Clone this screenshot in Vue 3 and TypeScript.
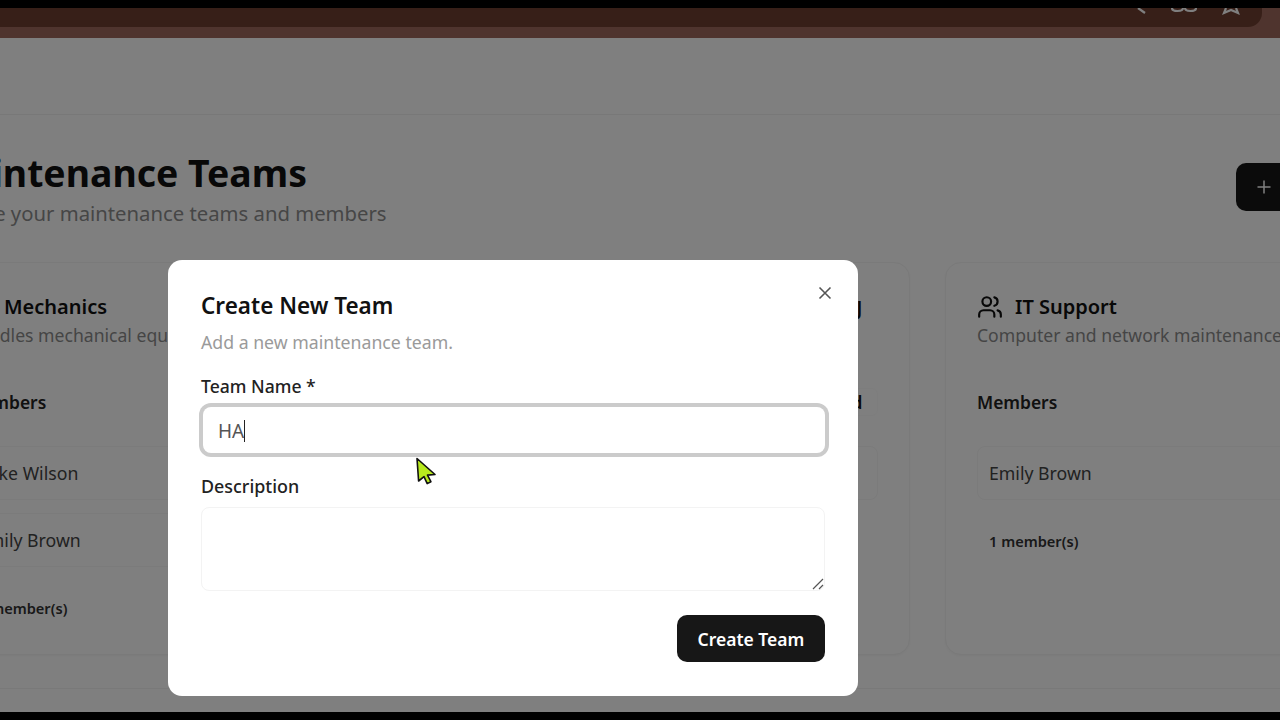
<template>
  <div class="screen">
    <div class="viewport">
      <!-- Browser chrome, cut off by the recording -->
      <div class="chrome">
        <div class="toolbar">
          <svg class="tool tool-chevron" viewBox="0 0 14 14"><path d="M3 0l7 5" /></svg>
          <svg class="tool tool-link" viewBox="0 0 26 14"><path d="M1 0c0 2.500 2 3 5.500 3S12 2.500 12 0M14 0c0 2.500 2 3 5.500 3S25 2.500 25 0" /></svg>
          <svg class="tool tool-star" viewBox="0 0 20 14"><path d="M5 0 3 5l7-3 7 3-2-5" /></svg>
        </div>
      </div>

      <div class="page">
        <div class="navbar"></div>
        <main class="content">
          <div class="page-head">
            <div>
              <h1>Maintenance Teams</h1>
              <p>Manage your maintenance teams and members</p>
            </div>
            <button class="add-team" type="button" tabindex="-1">
              <svg viewBox="0 0 16 16"><path d="M8 1.500v13M1.500 8h13" /></svg>
              Add Team
            </button>
          </div>

          <div class="team-grid">
            <section v-for="team in teams" :key="team.name" class="team-card">
              <div class="card-title">
                <svg class="team-icon" viewBox="0 0 24 24">
                  <circle cx="9" cy="7" r="4" />
                  <path d="M16 21v-2a4 4 0 0 0-4-4H6a4 4 0 0 0-4 4v2" />
                  <path d="M16 3.130a4 4 0 0 1 0 7.750" />
                  <path d="M22 21v-2a4 4 0 0 0-3-3.870" />
                </svg>
                <h2>{{ team.name }}</h2>
                <span v-if="team.tag" class="title-tag">{{ team.tag }}</span>
              </div>
              <p class="card-desc">{{ team.description }}</p>
              <div class="members-head">
                <span>Members</span>
                <span v-if="team.action" class="member-action">{{ team.action }}</span>
              </div>
              <div v-for="member in team.members" :key="member" class="member-row">{{ member }}</div>
              <div class="member-count">{{ team.members.length }} member(s)</div>
            </section>
          </div>
          <div class="next-row"></div>
        </main>
      </div>

      <div class="overlay">
        <form class="modal" @submit.prevent>
          <button class="close" type="button" aria-label="Close" tabindex="-1">
            <svg viewBox="0 0 16 16"><path d="M2.500 2.500l11 11M13.500 2.500l-11 11" /></svg>
          </button>
          <h3>Create New Team</h3>
          <p class="modal-sub">Add a new maintenance team.</p>
          <label class="field-label">Team Name *</label>
          <div class="name-input">
            <span>HA</span><i class="caret"></i>
          </div>
          <label class="field-label desc-label" for="team-desc">Description</label>
          <div class="desc-wrap">
            <textarea id="team-desc" tabindex="-1"></textarea>
            <svg class="resizer" viewBox="0 0 12 12"><path d="M1 11 11 1M7 11l4-4" /></svg>
          </div>
          <div class="modal-foot">
            <button class="submit" type="submit" tabindex="-1">Create Team</button>
          </div>
        </form>

        <svg class="cursor" viewBox="0 0 22 28">
          <path d="M2 1.500 20 17.500l-7.500.6 3.400 6.600-3.700 1.900-3.200-6.900L3.600 24z" />
        </svg>
      </div>
    </div>
  </div>
</template>

<script setup lang="ts">
interface Team {
  name: string;
  description: string;
  tag?: string;
  action?: string;
  members: string[];
}

const teams: Team[] = [
  {
    name: "Mechanics",
    description: "Handles mechanical equipment repairs",
    members: ["Mike Wilson", "Emily Brown"],
  },
  {
    name: "Facilities",
    description: "Building systems",
    tag: "J",
    action: "Add",
    members: ["Sarah Lee"],
  },
  {
    name: "IT Support",
    description: "Computer and network maintenance",
    members: ["Emily Brown"],
  },
];
</script>

<style>
html,
body {
  margin: 0;
  background: #000;
}
</style>

<style scoped>
.screen {
  width: 1280px;
  height: 720px;
  padding: 8px 0;
  box-sizing: border-box;
  background: #000;
  overflow: hidden;
  font-family: "Noto Sans", "Open Sans", sans-serif;
}

.viewport {
  position: relative;
  height: 704px;
  overflow: hidden;
  display: flex;
  flex-direction: column;
}

/* ── Browser chrome ── */
.chrome {
  flex: 0 0 30px;
  box-sizing: border-box;
  background: #9e695c;
  padding-right: 18px;
}

.toolbar {
  position: relative;
  height: 19px;
  background: #6f3f31;
  border-radius: 0 0 14px 0;
}

.tool {
  position: absolute;
  top: 0;
  fill: none;
  stroke: #fff;
  stroke-width: 2.200;
}

.tool-chevron {
  left: 1135px;
  width: 14px;
  height: 14px;
}

.tool-link {
  left: 1171px;
  width: 26px;
  height: 14px;
}

.tool-star {
  left: 1221px;
  width: 20px;
  height: 14px;
}

/* ── Page behind the dialog ── */
.page {
  flex: 1;
  min-height: 0;
  background: #fff;
  overflow: hidden;
}

.navbar {
  height: 76px;
  border-bottom: 1px solid #f1f1f1;
}

.content {
  width: 1600px;
  margin-left: -66px;
}

.page-head {
  width: 1457px;
  height: 147px;
  display: flex;
  justify-content: space-between;
  align-items: flex-start;
  padding-top: 36px;
  box-sizing: border-box;
}

h1 {
  margin: 0;
  font-size: 37.400px;
  line-height: 44px;
  font-weight: 700;
  color: #111;
  white-space: nowrap;
}

.page-head p {
  margin: 4px 0 0 -6px;
  font-size: 20.300px;
  line-height: 28px;
  color: #8d8d8d;
  white-space: nowrap;
}

.add-team {
  display: flex;
  align-items: center;
  gap: 12px;
  height: 48px;
  margin-top: 12px;
  padding: 0 20px;
  border: 0;
  border-radius: 10px;
  background: #171717;
  color: #fff;
  font: 600 18px "Noto Sans", sans-serif;
  white-space: nowrap;
}

.add-team svg {
  width: 16px;
  height: 16px;
  fill: none;
  stroke: #fff;
  stroke-width: 1.500;
}

.team-grid {
  display: grid;
  grid-template-columns: repeat(3, 470px);
  column-gap: 35.500px;
}

.team-card {
  height: 393px;
  box-sizing: border-box;
  padding: 29px 31px 0;
  border: 1px solid #f4f4f4;
  border-radius: 16px;
  background: #fff;
  box-shadow: 0 1px 3px rgba(0, 0, 0, 0.04);
}

.card-title {
  display: flex;
  align-items: center;
  gap: 12px;
  height: 30px;
}

.team-icon {
  flex: none;
  width: 26px;
  height: 26px;
  fill: none;
  stroke: #111;
  stroke-width: 2;
  stroke-linecap: round;
  stroke-linejoin: round;
}

h2 {
  margin: 0;
  font-size: 20px;
  line-height: 30px;
  font-weight: 600;
  color: #111;
  white-space: nowrap;
}

.title-tag {
  margin-left: auto;
  padding-right: 15px;
  font-size: 20px;
  font-weight: 600;
  color: #111;
}

.card-desc {
  margin: 0;
  font-size: 17.600px;
  line-height: 26px;
  color: #8b8b8b;
  white-space: nowrap;
  overflow: hidden;
}

.members-head {
  display: flex;
  justify-content: space-between;
  margin-top: 40px;
  height: 28px;
  font-size: 17.400px;
  line-height: 28px;
  font-weight: 600;
  color: #222;
}

.member-action {
  padding: 0 14px;
  border: 1px solid #fbfbfb;
  border-radius: 6px;
  line-height: 26px;
  color: #111;
}

.member-row {
  height: 54px;
  box-sizing: border-box;
  margin-top: 30px;
  padding-left: 11px;
  border: 1px solid #f6f6f6;
  border-radius: 8px;
  font-size: 17.700px;
  line-height: 52px;
  color: #444;
}

.member-row + .member-row {
  margin-top: 13px;
}

.member-count {
  margin-top: 30px;
  padding-left: 12px;
  font-size: 14.600px;
  line-height: 22px;
  font-weight: 600;
  color: #333;
}

.next-row {
  height: 1px;
  margin-top: 33px;
  background: #f3f3f3;
}

/* ── Dialog ── */
.overlay {
  position: absolute;
  inset: 0;
  background: rgba(0, 0, 0, 0.5);
}

.modal {
  position: absolute;
  left: 168px;
  top: 252px;
  width: 690px;
  height: 436px;
  box-sizing: border-box;
  padding: 30px 33px 0;
  border-radius: 14px;
  background: #fff;
  display: flex;
  flex-direction: column;
}

.close {
  position: absolute;
  top: 25px;
  right: 25px;
  width: 16px;
  height: 16px;
  padding: 0;
  border: 0;
  background: none;
}

.close svg {
  display: block;
  width: 16px;
  height: 16px;
  fill: none;
  stroke: #555;
  stroke-width: 1.600;
}

h3 {
  margin: 0;
  font-size: 22.500px;
  line-height: 32px;
  font-weight: 600;
  color: #111;
}

.modal-sub {
  margin: 7px 0 0;
  font-size: 17.700px;
  line-height: 26px;
  color: #9a9a9a;
}

.field-label {
  margin-top: 18px;
  font-size: 17.600px;
  line-height: 26px;
  font-weight: 500;
  color: #222;
}

.desc-label {
  margin-top: 20px;
  font-size: 17.900px;
}

.name-input {
  display: flex;
  align-items: center;
  width: 622px;
  height: 46px;
  margin: 8px 0 0 2px;
  padding: 2px 0 0 15px;
  box-sizing: border-box;
  border-radius: 8px;
  box-shadow: 0 0 0 4px #cbcbcb;
  font-size: 19px;
  color: #555;
}

.caret {
  width: 1px;
  height: 22px;
  background: #222;
}

.desc-wrap {
  position: relative;
  width: 624px;
  height: 84px;
  margin-top: 8px;
}

textarea {
  display: block;
  width: 100%;
  height: 100%;
  box-sizing: border-box;
  border: 1px solid #f3f3f3;
  border-radius: 8px;
  background: #fff;
  outline: none;
  resize: none;
}

.resizer {
  position: absolute;
  right: 1px;
  bottom: 1px;
  width: 12px;
  height: 12px;
  fill: none;
  stroke: #555;
  stroke-width: 1.200;
  pointer-events: none;
}

.modal-foot {
  display: flex;
  justify-content: flex-end;
  margin-top: 24px;
}

.submit {
  width: 148px;
  height: 47px;
  border: 0;
  border-radius: 10px;
  background: #171717;
  color: #fff;
  font: 600 17.500px "Noto Sans", sans-serif;
}

.cursor {
  position: absolute;
  left: 415px;
  top: 449px;
  width: 22px;
  height: 28px;
  fill: #b8ea1e;
  stroke: #111;
  stroke-width: 1.600;
  stroke-linejoin: round;
}
</style>
